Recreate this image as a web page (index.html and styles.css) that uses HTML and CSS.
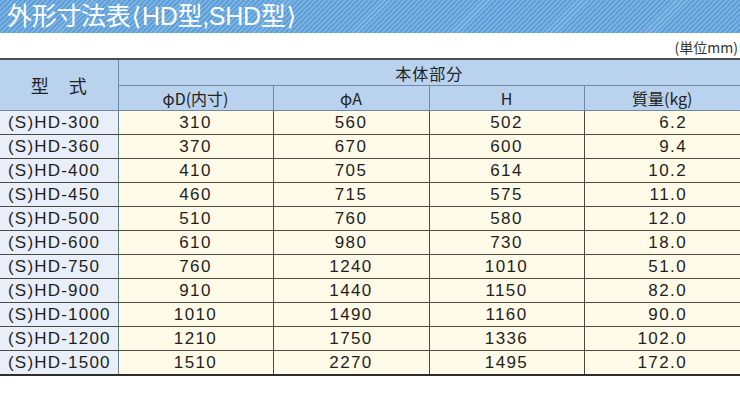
FILE: index.html
```html
<!DOCTYPE html>
<html lang="ja">
<head>
<meta charset="utf-8">
<link rel="stylesheet" href="styles.css">
</head>
<body>
<div class="banner"><h1 class="title">外形寸法表<span class="br">⟨</span>HD型,SHD型<span class="br">⟩</span></h1></div>
<div class="unit">(単位mm)</div>
<table class="spec">
  <colgroup>
    <col class="c-model"><col class="c-d"><col class="c-a"><col class="c-h"><col class="c-m">
  </colgroup>
  <thead>
    <tr class="h1">
      <th rowspan="2" class="model-h">型<span class="gap"></span>式</th>
      <th colspan="4" class="body-h">本体部分</th>
    </tr>
    <tr class="h2">
      <th>φD(内寸)</th>
      <th>φA</th>
      <th>H</th>
      <th>質量(kg)</th>
    </tr>
  </thead>
  <tbody>
    <tr><td class="model">(S)HD-300</td><td>310</td><td>560</td><td>502</td><td class="mass">6.2</td></tr>
    <tr><td class="model">(S)HD-360</td><td>370</td><td>670</td><td>600</td><td class="mass">9.4</td></tr>
    <tr><td class="model">(S)HD-400</td><td>410</td><td>705</td><td>614</td><td class="mass">10.2</td></tr>
    <tr><td class="model">(S)HD-450</td><td>460</td><td>715</td><td>575</td><td class="mass">11.0</td></tr>
    <tr><td class="model">(S)HD-500</td><td>510</td><td>760</td><td>580</td><td class="mass">12.0</td></tr>
    <tr><td class="model">(S)HD-600</td><td>610</td><td>980</td><td>730</td><td class="mass">18.0</td></tr>
    <tr><td class="model">(S)HD-750</td><td>760</td><td>1240</td><td>1010</td><td class="mass">51.0</td></tr>
    <tr><td class="model">(S)HD-900</td><td>910</td><td>1440</td><td>1150</td><td class="mass">82.0</td></tr>
    <tr><td class="model">(S)HD-1000</td><td>1010</td><td>1490</td><td>1160</td><td class="mass">90.0</td></tr>
    <tr><td class="model">(S)HD-1200</td><td>1210</td><td>1750</td><td>1336</td><td class="mass">102.0</td></tr>
    <tr><td class="model">(S)HD-1500</td><td>1510</td><td>2270</td><td>1495</td><td class="mass">172.0</td></tr>
  </tbody>
</table>
</body>
</html>
```
FILE: styles.css
```css
html, body {
  margin: 0;
  padding: 0;
  background: #ffffff;
}
body {
  width: 740px;
  font-family: "Liberation Sans", "Noto Sans CJK JP", sans-serif;
  color: #222;
}
.banner {
  height: 33px;
  background: repeating-linear-gradient(135deg, #5d9fd6 0px, #5d9fd6 2px, #7fb6e4 2px, #7fb6e4 3.5px);
  display: flex;
  align-items: center;
  padding-left: 7px;
}
.title {
  margin: 0;
  font-family: "Liberation Sans", "Noto Sans CJK JP", sans-serif;
  font-weight: 400;
  font-size: 25px;
  line-height: 1;
  color: #ffffff;
  letter-spacing: -0.3px;
}
.br {
  font-family: "DejaVu Sans", sans-serif;
  margin: 0 1px;
}
.unit {
  height: 25px;
  line-height: 28px;
  text-align: right;
  padding-right: 2px;
  font-family: "Noto Sans CJK JP", sans-serif;
  font-size: 14px;
  color: #333;
}
.spec {
  width: 740px;
  border-collapse: collapse;
  table-layout: fixed;
  border-top: 2px solid #4a4e55;
  border-bottom: 2px solid #2d2d2a;
}
.c-model { width: 118px; }
.c-d { width: 155px; }
.c-a { width: 156px; }
.c-h { width: 155px; }
.c-m { width: 156px; }
.spec th {
  background: #b9d2ee;
  font-weight: 400;
  font-family: "Noto Sans CJK JP", sans-serif;
  font-size: 16px;
  color: #222;
  padding: 0;
  border: 1px solid #6f89a6;
  border-top: none;
}
.spec th:last-child { border-right: none; }
.spec .h1 th { height: 25px; }
.spec .h2 th { height: 24px; line-height: 24px; }
.spec .model-h {
  border-left: none;
  font-size: 18px;
  border-right: 1px solid #6f89a6;
}
.gap { display: inline-block; width: 20px; }
.body-h {
  font-size: 17px;
  letter-spacing: 1px;
}
.spec td {
  height: 23px;
  padding: 0;
  background: #fffbe8;
  border: 1px solid #4a4a42;
  border-top: none;
  font-size: 17px;
  letter-spacing: 1.4px;
  text-align: center;
  line-height: 23px;
  color: #1e1e1e;
}
.spec td:last-child { border-right: none; }
.spec td.model {
  background: #e9eff8;
  border-left: none;
  border-right: 1px solid #6e7f90;
  text-align: left;
  padding-left: 8px;
  letter-spacing: 1.2px;
}
.spec td.mass {
  text-align: right;
  padding-right: 53px;
}
.spec tbody tr:last-child td { border-bottom: none; }
```
